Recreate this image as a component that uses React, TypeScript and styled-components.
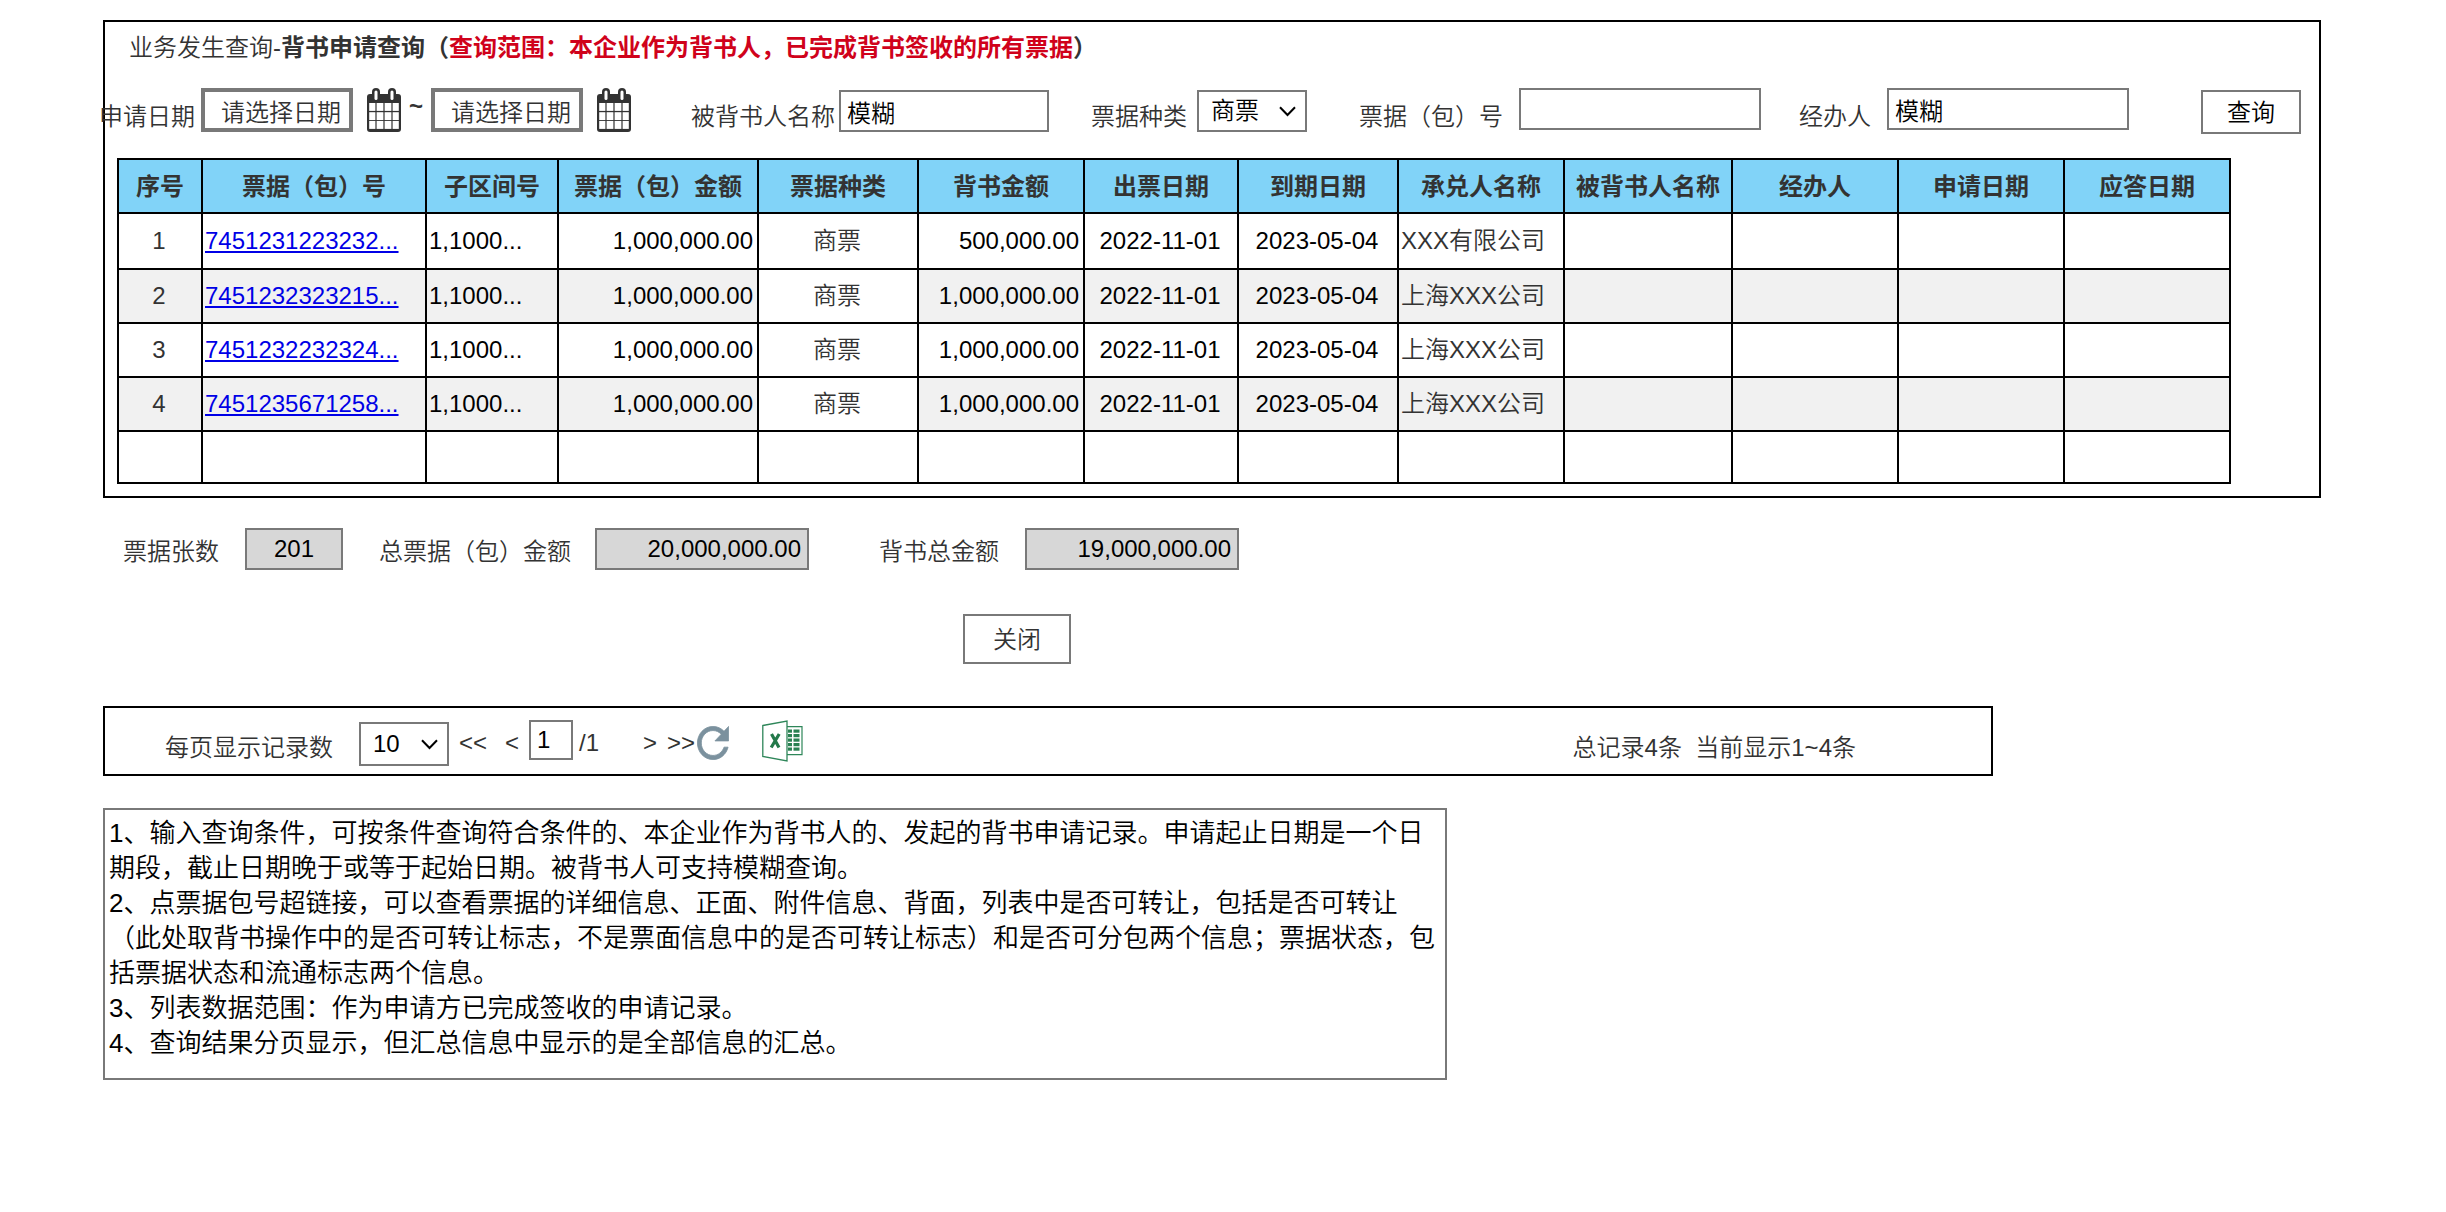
import React from "react";
import styled, { createGlobalStyle, css } from "styled-components";

const font = `"Liberation Sans", Arial, "Noto Sans CJK SC", sans-serif`;

const GlobalStyle = createGlobalStyle`
  *, *::before, *::after { box-sizing: border-box; }
  body {
    margin: 0;
    background: #fff;
    color: #333;
    font: 24px/36px ${font};
    font-weight: 350;
  }
  button, input, select { font: inherit; color: #000; margin: 0; border-radius: 0; }
`;

type Align = "flex-start" | "center" | "flex-end";

const Page = styled.main`
  padding: 20px 125px 40px 103px;
`;

const QueryPanel = styled.section`
  border: 2px solid #000;
  padding: 8px 12px 12px;
`;

const Title = styled.h1`
  margin: 0 0 22px;
  padding-left: 12px;
  font-size: 24px;
  line-height: 36px;
  font-weight: 700;
`;

const TitlePath = styled.span`
  font-weight: 350;
`;

const TitleScope = styled.span`
  color: #d0021b;
`;

const FilterBar = styled.form`
  display: flex;
  align-items: flex-start;
  height: 46px;
  margin: 0 6px 24px -18px;
`;

const Group = styled.div<{ $before?: number; $gap: number; $align?: Align }>`
  display: flex;
  height: 46px;
  flex: none;
  align-items: ${(p) => p.$align ?? "center"};
  gap: ${(p) => p.$gap}px;
  margin-left: ${(p) => p.$before ?? 0}px;
`;

const FilterLabel = styled.label`
  padding-top: 11px;
  line-height: 36px;
  white-space: nowrap;
`;

const box = css`
  border: 2px solid #797979;
  background: #fff;
`;

const TextInput = styled.input<{ $width: number }>`
  ${box}
  width: ${(p) => p.$width}px;
  height: 42px;
  padding: 0 6px;
`;

const DateInput = styled.input`
  width: 152px;
  height: 44px;
  padding: 0 0 0 16px;
  border: 4px solid #797979;
  background: #fff;
  color: #333;
`;

const IconButton = styled.button`
  display: block;
  flex: none;
  padding: 0;
  border: 0;
  background: none;
  line-height: 0;

  svg { display: block; }
`;

const Tilde = styled.span`
  width: 16px;
  font-weight: 700;
  text-align: center;
  margin: 0 7px;
`;

const SelectWrap = styled.div<{ $width: number; $height: number }>`
  position: relative;
  flex: none;
  width: ${(p) => p.$width}px;
  height: ${(p) => p.$height}px;

  svg {
    position: absolute;
    right: 11px;
    top: 50%;
    margin-top: -5px;
    pointer-events: none;
  }
`;

const NativeSelect = styled.select`
  ${box}
  appearance: none;
  width: 100%;
  height: 100%;
  padding: 0 0 0 12px;
`;

const Button = styled.button<{ $width: number; $height: number }>`
  ${box}
  flex: none;
  width: ${(p) => p.$width}px;
  height: ${(p) => p.$height}px;
  padding: 2px 0 0;
`;

const SearchButton = styled(Button)`
  margin: 2px 0 0 auto;
`;

const CloseButton = styled(Button)`
  color: #333;
`;

const Table = styled.table`
  width: calc(100% - 76px);
  table-layout: fixed;
  border-collapse: collapse;
`;

const HeadCell = styled.th`
  height: 54px;
  padding: 2px 0 0;
  border: 2px solid #000;
  background: #81d3f8;
  font-weight: 700;
  white-space: nowrap;
`;

const BodyRow = styled.tr<{ $height: number; $striped: boolean }>`
  height: ${(p) => p.$height}px;
  background: ${(p) => (p.$striped ? "#f1f1f1" : "#fff")};
`;

const Cell = styled.td<{ $align?: "left" | "center" | "right"; $muted?: boolean; $plain?: boolean }>`
  padding: 0 4px 0 2px;
  border: 2px solid #000;
  text-align: ${(p) => p.$align ?? "center"};
  color: ${(p) => (p.$muted ? "#333" : "#000")};
  ${(p) => p.$plain && "background: #fff;"}
  line-height: 36px;
  white-space: nowrap;
`;

const BillLink = styled.a`
  color: #0000e6;
`;

const Summary = styled.div`
  display: flex;
  margin-top: 30px;
  padding-left: 20px;
`;

const SummaryItem = styled.div<{ $before?: number; $gap: number }>`
  display: flex;
  align-items: flex-end;
  gap: ${(p) => p.$gap}px;
  margin-left: ${(p) => p.$before ?? 0}px;
`;

const Label = styled.label`
  line-height: 36px;
  white-space: nowrap;
`;

const Total = styled(TextInput)<{ $center?: boolean }>`
  background: #d7d7d7;
  text-align: ${(p) => (p.$center ? "center" : "right")};
`;

const Actions = styled.div`
  margin-top: 44px;
  padding-left: 860px;
`;

const Pager = styled.nav`
  display: flex;
  align-items: center;
  max-width: 1890px;
  height: 70px;
  margin-top: 42px;
  padding: 12px 135px 8px 60px;
  border: 2px solid #000;
`;

const PagerItem = styled.div<{ $before: number; $align?: Align }>`
  flex: none;
  align-self: ${(p) => p.$align ?? "center"};
  margin-left: ${(p) => p.$before}px;
`;

const StepButton = styled.button`
  display: block;
  padding: 0;
  border: 0;
  background: none;
  color: #333;
  line-height: 36px;
`;

const PageInput = styled(TextInput)`
  display: block;
  height: 40px;
`;

const PagerStatus = styled.div`
  align-self: flex-end;
  margin-left: auto;
  white-space: pre;
`;

const Notes = styled.section`
  ${box}
  max-width: 1344px;
  margin-top: 32px;
  padding: 6px 4px 17px;
  color: #000;
  font-size: 26px;
  line-height: 35px;

  p { margin: 0; }
`;

function Chevron() {
  return (
    <svg width="17" height="11" viewBox="0 0 17 11" fill="none" stroke="#000" strokeWidth="2" aria-hidden="true">
      <path d="M1 1.2 8.5 9 16 1.2" />
    </svg>
  );
}

function CalendarIcon() {
  return (
    <svg width="34" height="44" viewBox="0 0 34 44" aria-hidden="true">
      <rect y="6" width="34" height="38" rx="3" fill="#333" />
      <rect x="5" y="0" width="8" height="13" rx="4" fill="#333" />
      <rect x="21" y="0" width="8" height="13" rx="4" fill="#333" />
      <rect x="7.5" y="2.5" width="3" height="9.5" rx="1.5" fill="#fff" />
      <rect x="23.5" y="2.5" width="3" height="9.5" rx="1.5" fill="#fff" />
      {[15, 24.2, 33].map((y) =>
        [2.2, 9.6, 17.6, 25.6].map((x) => (
          <rect key={`${x}-${y}`} x={x} y={y} width={x === 2.2 || x === 25.6 ? 6.2 : 6.8} height="7.9" fill="#fff" />
        ))
      )}
    </svg>
  );
}

function RefreshIcon() {
  return (
    <svg width="32" height="34" viewBox="3.8 3.8 16.4 16.4" preserveAspectRatio="none" aria-hidden="true">
      <path
        fill="#7b919e"
        stroke="#7b919e"
        strokeWidth="0.4"
        d="M17.65 6.35C16.2 4.9 14.21 4 12 4c-4.42 0-7.99 3.58-7.99 8s3.57 8 7.99 8c3.73 0 6.84-2.55 7.73-6h-2.08c-.82 2.33-3.04 4-5.65 4-3.31 0-6-2.69-6-6s2.69-6 6-6c1.66 0 3.14.69 4.22 1.78L13 11h7V4l-2.35 2.35z"
      />
    </svg>
  );
}

function ExcelIcon() {
  const rows = [9.5, 14, 18.5, 23, 27.5];
  return (
    <svg width="42" height="42" viewBox="0 0 42 42" aria-hidden="true">
      <path d="M25 6.7h15v28H25" fill="#fff" stroke="#2e8659" strokeWidth="1.2" />
      {rows.map((y) => (
        <g key={y} fill="#2a8152">
          <rect x="26" y={y} width="4" height="3.2" />
          <rect x="31.5" y={y} width="6" height="3.2" />
        </g>
      ))}
      <path d="M.8 5.5 25 1v40L.8 36.5z" fill="#fff" stroke="#2e8659" strokeWidth="1.3" />
      <path d="M9.5 14 17 27.5M17.2 14 9.2 27.5" fill="none" stroke="#23794a" strokeWidth="3.2" />
    </svg>
  );
}

const columns: [string, number][] = [
  ["序号", 84],
  ["票据（包）号", 224],
  ["子区间号", 132],
  ["票据（包）金额", 200],
  ["票据种类", 160],
  ["背书金额", 166],
  ["出票日期", 154],
  ["到期日期", 160],
  ["承兑人名称", 166],
  ["被背书人名称", 168],
  ["经办人", 166],
  ["申请日期", 166],
  ["应答日期", 166],
];

const totalWidth = columns.reduce((sum, [, width]) => sum + width, 0);

const bills = [
  { no: "7451231223232...", amount: "500,000.00", acceptor: "XXX有限公司" },
  { no: "7451232323215...", amount: "1,000,000.00", acceptor: "上海XXX公司" },
  { no: "7451232232324...", amount: "1,000,000.00", acceptor: "上海XXX公司" },
  { no: "7451235671258...", amount: "1,000,000.00", acceptor: "上海XXX公司" },
];

export default function App() {
  return (
    <>
      <GlobalStyle />
      <Page>
        <QueryPanel>
          <Title>
            <TitlePath>业务发生查询-</TitlePath>背书申请查询（
            <TitleScope>查询范围：本企业作为背书人，已完成背书签收的所有票据</TitleScope>）
          </Title>

          <FilterBar onSubmit={(e) => e.preventDefault()}>
            <Group $gap={6} $align="flex-start">
              <FilterLabel htmlFor="from">申请日期</FilterLabel>
              <DateInput id="from" defaultValue="请选择日期" />
            </Group>
            <Group $before={14} $gap={0} $align="flex-start">
              <IconButton type="button" aria-label="选择起始日期"><CalendarIcon /></IconButton>
              <Tilde>~</Tilde>
              <DateInput aria-label="截止日期" defaultValue="请选择日期" />
            </Group>
            <Group $before={14} $gap={0} $align="flex-start">
              <IconButton type="button" aria-label="选择截止日期"><CalendarIcon /></IconButton>
            </Group>
            <Group $before={60} $gap={4}>
              <FilterLabel htmlFor="endorsee">被背书人名称</FilterLabel>
              <TextInput id="endorsee" $width={210} defaultValue="模糊" />
            </Group>
            <Group $before={42} $gap={10}>
              <FilterLabel htmlFor="kind">票据种类</FilterLabel>
              <SelectWrap $width={110} $height={42}>
                <NativeSelect id="kind"><option>商票</option></NativeSelect>
                <Chevron />
              </SelectWrap>
            </Group>
            <Group $before={52} $gap={16} $align="flex-start">
              <FilterLabel htmlFor="bill">票据（包）号</FilterLabel>
              <TextInput id="bill" $width={242} />
            </Group>
            <Group $before={38} $gap={16} $align="flex-start">
              <FilterLabel htmlFor="operator">经办人</FilterLabel>
              <TextInput id="operator" $width={242} defaultValue="模糊" />
            </Group>
            <SearchButton type="submit" $width={100} $height={44}>查询</SearchButton>
          </FilterBar>

          <Table>
            <colgroup>
              {columns.map(([name, width]) => (
                <col key={name} style={{ width: `${(width / totalWidth) * 100}%` }} />
              ))}
            </colgroup>
            <thead>
              <tr>
                {columns.map(([name]) => <HeadCell key={name} scope="col">{name}</HeadCell>)}
              </tr>
            </thead>
            <tbody>
              {bills.map((bill, i) => (
                <BodyRow key={bill.no} $height={i === 0 ? 56 : 54} $striped={i % 2 === 1}>
                  <Cell $muted>{i + 1}</Cell>
                  <Cell $align="left"><BillLink href="#">{bill.no}</BillLink></Cell>
                  <Cell $align="left">1,1000...</Cell>
                  <Cell $align="right">1,000,000.00</Cell>
                  <Cell $muted $plain>商票</Cell>
                  <Cell $align="right">{bill.amount}</Cell>
                  <Cell>2022-11-01</Cell>
                  <Cell>2023-05-04</Cell>
                  <Cell $align="left" $muted>{bill.acceptor}</Cell>
                  <Cell /><Cell /><Cell /><Cell />
                </BodyRow>
              ))}
              <BodyRow $height={52} $striped={false}>
                {columns.map(([name]) => <Cell key={name} />)}
              </BodyRow>
            </tbody>
          </Table>
        </QueryPanel>

        <Summary>
          <SummaryItem $gap={26}>
            <Label htmlFor="count">票据张数</Label>
            <Total id="count" $width={98} $center readOnly value="201" />
          </SummaryItem>
          <SummaryItem $before={36} $gap={24}>
            <Label htmlFor="billTotal">总票据（包）金额</Label>
            <Total id="billTotal" $width={214} readOnly value="20,000,000.00" />
          </SummaryItem>
          <SummaryItem $before={70} $gap={26}>
            <Label htmlFor="endorseTotal">背书总金额</Label>
            <Total id="endorseTotal" $width={214} readOnly value="19,000,000.00" />
          </SummaryItem>
        </Summary>

        <Actions>
          <CloseButton type="button" $width={108} $height={50}>关闭</CloseButton>
        </Actions>

        <Pager aria-label="分页">
          <PagerItem $before={0} $align="flex-end"><Label htmlFor="size">每页显示记录数</Label></PagerItem>
          <PagerItem $before={26} $align="flex-end">
            <SelectWrap $width={90} $height={44}>
              <NativeSelect id="size"><option>10</option></NativeSelect>
              <Chevron />
            </SelectWrap>
          </PagerItem>
          <PagerItem $before={10}><StepButton type="button">&lt;&lt;</StepButton></PagerItem>
          <PagerItem $before={18}><StepButton type="button">&lt;</StepButton></PagerItem>
          <PagerItem $before={10} $align="flex-start">
            <PageInput $width={44} aria-label="页码" defaultValue="1" />
          </PagerItem>
          <PagerItem $before={6}>/1</PagerItem>
          <PagerItem $before={44}><StepButton type="button">&gt;</StepButton></PagerItem>
          <PagerItem $before={10}><StepButton type="button">&gt;&gt;</StepButton></PagerItem>
          <PagerItem $before={2}>
            <IconButton type="button" aria-label="刷新"><RefreshIcon /></IconButton>
          </PagerItem>
          <PagerItem $before={33} $align="flex-start">
            <IconButton type="button" aria-label="导出Excel"><ExcelIcon /></IconButton>
          </PagerItem>
          <PagerStatus>{"总记录4条  当前显示1~4条"}</PagerStatus>
        </Pager>

        <Notes>
          <p>1、输入查询条件，可按条件查询符合条件的、本企业作为背书人的、发起的背书申请记录。申请起止日期是一个日期段，截止日期晚于或等于起始日期。被背书人可支持模糊查询。</p>
          <p>2、点票据包号超链接，可以查看票据的详细信息、正面、附件信息、背面，列表中是否可转让，包括是否可转让（此处取背书操作中的是否可转让标志，不是票面信息中的是否可转让标志）和是否可分包两个信息；票据状态，包括票据状态和流通标志两个信息。</p>
          <p>3、列表数据范围：作为申请方已完成签收的申请记录。</p>
          <p>4、查询结果分页显示，但汇总信息中显示的是全部信息的汇总。</p>
        </Notes>
      </Page>
    </>
  );
}
